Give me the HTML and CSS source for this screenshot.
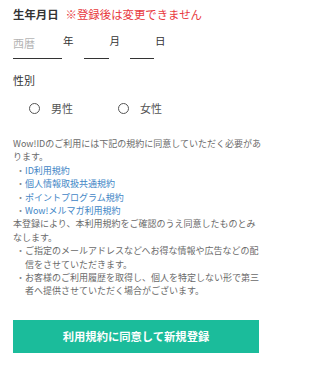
FILE: index.html
```html
<!DOCTYPE html>
<html lang="ja">
<head>
<meta charset="utf-8">
<title>生年月日</title>
<link rel="stylesheet" href="styles.css">
</head>
<body>
<div class="page">
  <div class="heading">
    <span class="heading-title">生年月日</span>
    <span class="heading-note">※登録後は変更できません</span>
  </div>
  <div class="date-row">
    <div class="date-group">
      <span class="date-input date-year"><span class="placeholder">西暦</span></span>
      <span class="date-unit">年</span>
    </div>
    <div class="date-group">
      <span class="date-input date-month"></span>
      <span class="date-unit">月</span>
    </div>
    <div class="date-group">
      <span class="date-input date-day"></span>
      <span class="date-unit">日</span>
    </div>
  </div>

  <div class="gender-label">性別</div>
  <div class="radio-row">
    <label class="radio"><span class="radio-circle"></span><span class="radio-text">男性</span></label>
    <label class="radio"><span class="radio-circle"></span><span class="radio-text">女性</span></label>
  </div>

  <div class="terms">
    <p class="terms-text">Wow!IDのご利用には下記の規約に同意していただく必要があります。</p>
    <ul class="terms-list links">
      <li><a href="#">ID利用規約</a></li>
      <li><a href="#">個人情報取扱共通規約</a></li>
      <li><a href="#">ポイントプログラム規約</a></li>
      <li><a href="#">Wow!メルマガ利用規約</a></li>
    </ul>
    <p class="terms-text">本登録により、本利用規約をご確認のうえ同意したものとみなします。</p>
    <ul class="terms-list">
      <li>ご指定のメールアドレスなどへお得な情報や広告などの配信をさせていただきます。</li>
      <li>お客様のご利用履歴を取得し、個人を特定しない形で第三者へ提供させていただく場合がございます。</li>
    </ul>
  </div>

  <button class="submit" type="button">利用規約に同意して新規登録</button>
</div>
</body>
</html>
```

FILE: styles.css
```css
* {
  box-sizing: border-box;
}

html, body {
  margin: 0;
  padding: 0;
  background: #ffffff;
}

body {
  font-family: "Noto Sans CJK JP", "Noto Sans", sans-serif;
  color: #333333;
}

.page {
  width: 272px;
  padding: 6px 13px 0 13px;
}

.heading {
  display: flex;
  align-items: center;
  gap: 7px;
  line-height: 16px;
  height: 16px;
}

.heading-title {
  font-size: 11.4px;
  font-weight: 700;
  color: #333333;
}

.heading-note {
  font-size: 11.4px;
  color: #e8383d;
}

.date-row {
  display: flex;
  align-items: flex-start;
  gap: 10px;
  margin-top: 11px;
}

.date-group {
  display: flex;
  align-items: flex-start;
}

.date-input {
  display: block;
  height: 26px;
  line-height: 16px;
  padding-bottom: 9px;
  border-bottom: 1px solid #333333;
}

.date-year {
  width: 49px;
}

.date-month {
  width: 25px;
}

.date-day {
  width: 24px;
}

.placeholder {
  font-size: 11px;
  color: #b5b5b5;
}

.date-unit {
  font-size: 10.5px;
  line-height: 16px;
  margin-left: 1px;
  color: #333333;
}

.gender-label {
  margin-top: 13px;
  font-size: 11px;
  line-height: 16px;
  color: #333333;
}

.radio-row {
  display: flex;
  align-items: center;
  margin-top: 12px;
  padding-left: 16px;
  gap: 45px;
  height: 16px;
}

.radio {
  display: flex;
  align-items: center;
  gap: 11px;
}

.radio-circle {
  display: block;
  width: 11px;
  height: 11px;
  border: 1.5px solid #555555;
  border-radius: 50%;
}

.radio-text {
  font-size: 11px;
  line-height: 16px;
  color: #555555;
}

.terms {
  margin-top: 21px;
  margin-right: -4px;
  font-size: 9px;
  line-height: 13.4px;
  color: #6a6a6a;
}

.terms-text {
  margin: 0;
}

.terms-list {
  list-style: none;
  margin: 0;
  padding: 0 0 0 12px;
}

.terms-list li {
  text-indent: -9px;
}

.terms-list li::before {
  content: "・";
  color: #888888;
}

.links a {
  color: #4286c6;
  text-decoration: none;
}

.submit {
  display: block;
  width: 100%;
  height: 33px;
  margin-top: 22px;
  border: 0;
  background: #1bbc9b;
  color: #ffffff;
  font-family: "Noto Sans CJK JP", "Noto Sans", sans-serif;
  font-size: 11.3px;
  font-weight: 700;
  padding: 0;
}
```
